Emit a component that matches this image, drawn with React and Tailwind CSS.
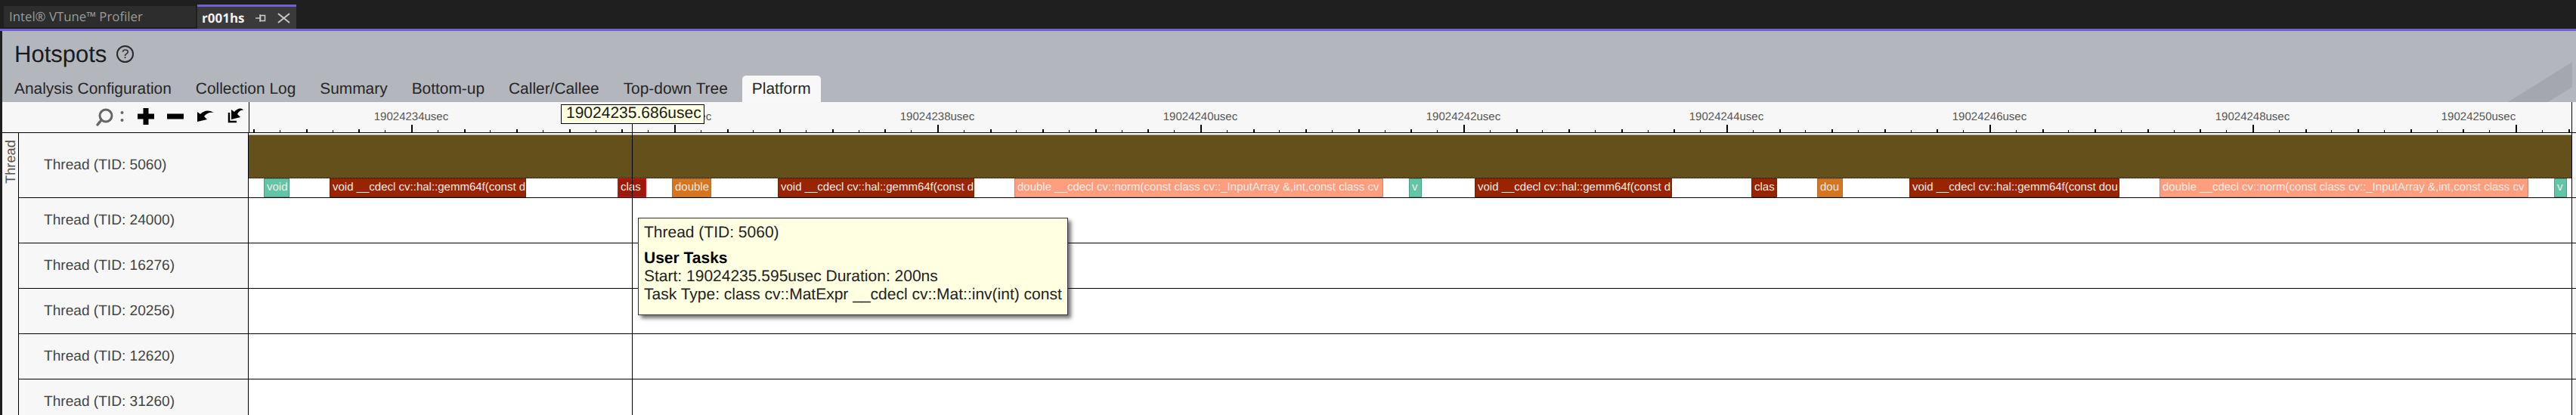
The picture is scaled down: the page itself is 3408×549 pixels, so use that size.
const MAJOR0 = 544 - 329;
const STEP = 34.8;
const ticks = Array.from({ length: 89 }, (_, i) => MAJOR0 - 6 * STEP + i * STEP);

const labels = [
  ["19024234usec", 544],
  ["19024236usec", 892],
  ["19024238usec", 1240],
  ["19024240usec", 1588],
  ["19024242usec", 1936],
  ["19024244usec", 2284],
  ["19024246usec", 2632],
  ["19024248usec", 2980],
  ["19024250usec", 3279],
];

const GEMM = "void __cdecl cv::hal::gemm64f(const d";
const NORM = "double __cdecl cv::norm(const class cv::_InputArray &,int,const class cv";
const tasks = [
  [349, 383, "void", "green"],
  [436, 696, GEMM, "red"],
  [817, 855, "clas", "sel"],
  [889, 941, "double", "orange"],
  [1029, 1289, GEMM, "red"],
  [1342, 1830, NORM, "salmon"],
  [1864, 1881, "v", "green"],
  [1951, 2212, GEMM, "red"],
  [2317, 2351, "clas", "red"],
  [2404, 2438, "dou", "orange"],
  [2526, 2804, "void __cdecl cv::hal::gemm64f(const dou", "red"],
  [2857, 3345, NORM, "salmon"],
  [3379, 3396, "v", "green"],
];

const taskCls = {
  green: "bg-[#62c5a7] border-[#4b9c85]",
  red: "bg-[#982400] border-[#7c2106]",
  sel: "bg-[#9d1a0a] border-[#ea0f1e]",
  orange: "bg-[#d6751f] border-[#ad7140]",
  salmon: "bg-[#ff9e7e] border-[#c28a75]",
};

const rows = ["24000", "16276", "20256", "12620", "31260"];
const tabs = ["Analysis Configuration", "Collection Log", "Summary", "Bottom-up", "Caller/Callee", "Top-down Tree"];

function ZoomIcons() {
  return (
    <div className="flex items-center h-full pr-[6px] justify-end">
      <svg width="200" height="30" viewBox="0 0 200 30" className="block">
        <circle cx="17" cy="13" r="8" fill="none" stroke="#666" strokeWidth="3" />
        <path d="M11 19 L6 25" stroke="#666" strokeWidth="3.5" strokeLinecap="round" />
        <circle cx="38.5" cy="9" r="2" fill="#666" />
        <circle cx="38.5" cy="19" r="2" fill="#666" />
        <path d="M66.5 3 h7 v7.5 h7.5 v7 h-7.5 v7.5 h-7 v-7.5 h-7.5 v-7 h7.5 z" fill="#000" />
        <rect x="98" y="10.5" width="22" height="7" fill="#000" />
        <path d="M138 21 V8 L142 11 C147 6 153 5 160 9 C154 8 150 10 147 14 L151 18 Z" fill="#000" />
        <path d="M180 9 V21 H190" fill="none" stroke="#000" strokeWidth="2.5" />
        <path d="M183 18 V5 L187 8 C191 3 197 2 199 6 C196 5 193 7 191 11 L195 15 Z" fill="#000" />
      </svg>
    </div>
  );
}

export default function App() {
  return (
    <div className="relative w-[3408px] h-[549px] overflow-hidden flex flex-col bg-[#1f1f1f] font-['Liberation_Sans',Arial,sans-serif] [text-rendering:geometricPrecision]">
      {/* Title tabs */}
      <div className="h-[38px] shrink-0 flex items-end pl-[5px] gap-[2px] font-['Open_Sans',sans-serif]">
        <div className="w-[254px] h-[28px] mb-[2px] bg-[#2d2d2d] text-[#9b9b9b] text-[16.8px] pl-[7px] flex items-center whitespace-nowrap">
          Intel® VTune™ Profiler
        </div>
        <div className="w-[131px] h-[32px] bg-[#3a3a3a] border-t-[3px] border-[#7160d8] flex items-center pl-[6px] relative">
          <span className="text-[#f0f0f0] font-bold text-[17px] leading-none">r001hs</span>
          <svg width="16" height="14" viewBox="0 0 16 14" className="absolute left-[77px] top-[8px]">
            <path d="M0 7 H6 M6 2 V12" stroke="#c8c8c8" strokeWidth="1.3" fill="none" />
            <rect x="6.5" y="3.5" width="6" height="7" stroke="#c8c8c8" strokeWidth="1.6" fill="none" />
          </svg>
          <svg width="17" height="14" viewBox="0 0 17 14" className="absolute left-[106px] top-[8px]">
            <path d="M1 1 L16 13 M16 1 L1 13" stroke="#c8c8c8" strokeWidth="2" fill="none" />
          </svg>
        </div>
      </div>
      <div className="h-[3px] shrink-0 bg-[#7160d8]" />

      <div className="flex-1 min-h-0 ml-[3px] flex flex-col bg-[#f7f7f7]">
        {/* Gray header */}
        <div className="relative h-[94px] shrink-0 bg-[#b3b6bd] overflow-hidden">
          <svg width="90" height="60" viewBox="0 0 90 60" className="absolute right-0 bottom-0">
            <path d="M0 60 L85 7 V40 L53 60 Z" fill="#a4a7af" />
          </svg>
          <div className="relative flex items-center h-[59px] pl-[16px] pt-[1px] gap-[13px]">
            <span className="text-[31px] text-[#1a1a1a] leading-none">Hotspots</span>
            <span className="w-[23px] h-[23px] rounded-full border-2 border-[#2a2a2a] flex items-center justify-center text-[17px] leading-none text-[#2a2a2a]">?</span>
          </div>
          <div className="relative flex items-end h-[35px] pl-[16px] text-[20.9px] text-[#262626] gap-[32px]">
            {tabs.map((t) => (
              <div key={t} className="h-[35px] flex items-center whitespace-nowrap">{t}</div>
            ))}
            <div className="h-[35px] -ml-[13px] px-[13px] bg-[#f8f8f8] rounded-t-[5px] flex items-center">Platform</div>
          </div>
        </div>

        {/* Timeline header */}
        <div className="h-[41px] shrink-0 flex border-b border-black">
          <div className="w-[326px] shrink-0"><ZoomIcons /></div>
          <div className="relative w-[3074px] shrink-0 border-x border-black bg-[#f7f7f7]">
            {labels.map(([t, x]) => (
              <span key={t} className="absolute top-[11px] -translate-x-1/2 text-[15px] leading-[18px] text-[#555] whitespace-nowrap" style={{ left: x - 330 }}>{t}</span>
            ))}
            {ticks.map((x, i) => {
              const idx = i - 6;
              const major = idx % 10 === 0;
              const even = idx % 2 === 0;
              return (
                <span
                  key={i}
                  className={"absolute bottom-0 bg-black " + (major ? "h-[10px] w-[2px]" : even ? "h-[4px] w-[2px]" : "h-[3px] w-px")}
                  style={{ left: Math.round(x) - 1 }}
                />
              );
            })}
          </div>
        </div>

        {/* Body */}
        <div className="flex-1 min-h-0 flex">
          <div className="w-[22px] shrink-0 border-r border-black relative">
            <span className="absolute left-[2px] top-[9px] h-[58px] text-[18.3px] leading-[18px] text-[#555] [writing-mode:vertical-rl] rotate-180">Thread</span>
          </div>
          <div className="flex-1 min-w-0 flex flex-col">
            <div className="h-[86px] shrink-0 flex border-b border-black">
              <div className="w-[303px] shrink-0 flex items-center pl-[33px] pt-[2px] text-[19.1px] text-[#444]">Thread (TID: 5060)</div>
              <div className="w-[3075px] shrink-0 border-x border-black bg-white flex flex-col">
                <div className="h-[2px] shrink-0" />
                <div className="h-[1px] shrink-0 bg-[#a8987a]" />
                <div className="h-[57px] shrink-0 bg-[#63501a] border-b border-dotted border-black" />
                <div className="relative flex-1">
                  {tasks.map(([a, b, t, c], i) => (
                    <div
                      key={i}
                      className={"absolute top-0 bottom-0 border overflow-hidden whitespace-nowrap text-[15px] leading-[22px] pl-[3px] text-[#f2ebe6] " + taskCls[c]}
                      style={{ left: a - 329, width: b - a }}
                    >
                      {t}
                    </div>
                  ))}
                </div>
              </div>
            </div>
            {rows.map((r) => (
              <div key={r} className="h-[60px] shrink-0 flex border-b border-black">
                <div className="w-[303px] shrink-0 flex items-center pl-[33px] pt-[2px] text-[19.1px] text-[#444]">Thread (TID: {r})</div>
                <div className="w-[3075px] shrink-0 border-x border-black bg-white" />
              </div>
            ))}
          </div>
        </div>
      </div>

      {/* Overlays: cursor, time flag, tooltip */}
      <div className="absolute left-[836px] top-[163px] bottom-0 w-px bg-black" />
      <div className="absolute left-[742px] top-[138px] w-[190px] h-[26px] bg-[#ffffe1] border border-black text-[21px] leading-[22px] text-[#1a1a1a] pl-[6px] whitespace-nowrap">19024235.686usec</div>
      <div className="absolute left-[844px] top-[288px] w-[569px] h-[129px] bg-[#ffffe1] border border-[#333] shadow-[4px_4px_5px_rgba(0,0,0,0.55)] pl-[7px] pt-[7px] text-[21px] leading-[24px] text-[#222] whitespace-nowrap">
        <div className="mb-[10px]">Thread (TID: 5060)</div>
        <div className="font-bold text-black">User Tasks</div>
        <div>Start: 19024235.595usec Duration: 200ns</div>
        <div>Task Type: class cv::MatExpr __cdecl cv::Mat::inv(int) const</div>
      </div>
    </div>
  );
}
